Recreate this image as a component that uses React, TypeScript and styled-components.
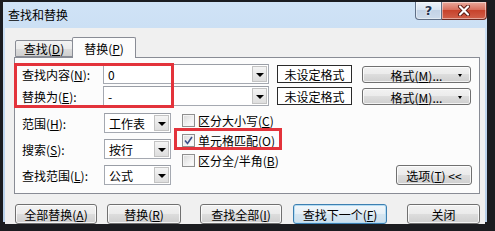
import styled, { createGlobalStyle } from 'styled-components';

const GlobalStyle = createGlobalStyle`
  html, body {
    margin: 0;
    padding: 0;
  }
  body {
    font-family: "Noto Sans CJK SC", "Noto Sans", sans-serif;
    font-size: 12px;
    color: #000000;
  }
`;

const Screen = styled.div`
  width: 495px;
  height: 231px;
  box-sizing: border-box;
  padding: 2px 8px 9px 3px;
  background: #1b1c20;
  overflow: hidden;
`;

const Window = styled.div`
  height: 100%;
  box-sizing: border-box;
  display: flex;
  flex-direction: column;
  padding: 0 2px 1px 2px;
  background: linear-gradient(180deg, #d0e3f6 0%, #c0d7ef 45%, #b8d0ea 100%);
`;

const TitleBar = styled.div`
  height: 26px;
  flex-shrink: 0;
  display: flex;
  align-items: flex-start;
  margin-right: -2px;
`;

const TitleText = styled.div`
  flex: 1;
  padding-left: 3px;
  line-height: 26px;
  font-size: 12px;
  color: #000000;
`;

const CaptionButton = styled.div<{ $w: number; $variant: 'help' | 'close' }>`
  width: ${(p) => p.$w}px;
  height: 18px;
  box-sizing: border-box;
  display: flex;
  align-items: center;
  justify-content: center;
  border: 1px solid ${(p) => (p.$variant === 'close' ? '#6b2a22' : '#5f6f86')};
  border-top: none;
  border-left-width: ${(p) => (p.$variant === 'close' ? '0' : '1px')};
  border-radius: ${(p) => (p.$variant === 'close' ? '0 0 4px 0' : '0 0 0 4px')};
  background: ${(p) =>
    p.$variant === 'close'
      ? 'linear-gradient(180deg, #e9a99c 0%, #d8705e 45%, #c7432c 50%, #d0604a 100%)'
      : 'linear-gradient(180deg, #eef3f9 0%, #d9e4f1 45%, #c3d3e6 50%, #cddbeb 100%)'};
  box-shadow: inset 0 0 0 1px rgba(255, 255, 255, 0.45);
`;

const HelpGlyph = styled.span`
  font-family: "DejaVu Sans", sans-serif;
  font-weight: bold;
  font-size: 13px;
  line-height: 1;
  color: #23324d;
  text-shadow: 0 0 2px #ffffff, 0 0 1px #ffffff;
`;

const Client = styled.div`
  flex: 1;
  display: flex;
  flex-direction: column;
  padding: 9px 5px 0 9px;
  background: #f0f0f0;
`;

const TabBar = styled.div`
  height: 20px;
  display: flex;
  align-items: flex-end;
  padding-left: 1px;
`;

const Tab = styled.div<{ $active?: boolean; $w: number }>`
  width: ${(p) => p.$w}px;
  height: ${(p) => (p.$active ? 21 : 17)}px;
  margin-bottom: ${(p) => (p.$active ? -1 : 0)}px;
  margin-left: ${(p) => (p.$active ? -1 : 0)}px;
  box-sizing: border-box;
  position: relative;
  z-index: ${(p) => (p.$active ? 1 : 0)};
  display: flex;
  align-items: center;
  justify-content: center;
  border: 1px solid #898c95;
  border-bottom: ${(p) => (p.$active ? 'none' : '1px solid #898c95')};
  border-radius: 2px 2px 0 0;
  background: ${(p) =>
    p.$active ? '#fcfcfc' : 'linear-gradient(180deg, #f3f3f3 0%, #ebebeb 50%, #dddddd 51%, #cfcfcf 100%)'};
`;

const Panel = styled.div`
  position: relative;
  display: flex;
  flex-direction: column;
  padding: 6px 7px 8px 7px;
  border: 1px solid #898c95;
  background: #fcfcfc;
`;

const FieldRow = styled.div`
  height: 20px;
  display: flex;
  align-items: center;
  & + & {
    margin-top: 2px;
  }
`;

const Label = styled.span<{ $w: number }>`
  width: ${(p) => p.$w}px;
  flex-shrink: 0;
  white-space: nowrap;
`;

const Key = styled.u`
  text-underline-offset: 1px;
`;

const Combo = styled.div<{ $w: number }>`
  width: ${(p) => p.$w}px;
  height: 20px;
  box-sizing: border-box;
  flex-shrink: 0;
  display: flex;
  align-items: center;
  border: 1px solid #a5a9b1;
  border-top-color: #9a9ea6;
  background: #ffffff;
`;

const ComboText = styled.span`
  flex: 1;
  padding-left: 4px;
  white-space: nowrap;
`;

const DropButton = styled.span`
  width: 15px;
  height: 16px;
  margin-right: 1px;
  box-sizing: border-box;
  display: flex;
  align-items: center;
  justify-content: center;
  border: 1px solid #c3c3c3;
  background: linear-gradient(180deg, #f4f4f4 0%, #dedede 100%);

  &::after {
    content: '';
    border-left: 4px solid transparent;
    border-right: 4px solid transparent;
    border-top: 4px solid #000000;
    margin-top: 1px;
  }
`;

const FormatState = styled.div`
  width: 75px;
  height: 18px;
  margin-left: 8px;
  box-sizing: border-box;
  display: flex;
  align-items: center;
  justify-content: center;
  border: 1px solid #2a2a2a;
  background: #ffffff;
  white-space: nowrap;
`;

const PushButton = styled.button<{ $w: number; $h?: number; $ml?: number; $focused?: boolean }>`
  width: ${(p) => p.$w}px;
  height: ${(p) => p.$h ?? 20}px;
  margin-left: ${(p) => p.$ml ?? 0}px;
  flex-shrink: 0;
  box-sizing: border-box;
  padding: 0;
  border: 1px solid ${(p) => (p.$focused ? '#3c7fb1' : '#707070')};
  border-radius: 3px;
  background: ${(p) =>
    p.$focused
      ? 'linear-gradient(180deg, #f1f7fb 0%, #e6f0f7 49%, #d6e6f1 50%, #cbdfed 100%)'
      : 'linear-gradient(180deg, #f2f2f2 0%, #ebebeb 49%, #dddddd 50%, #cfcfcf 100%)'};
  box-shadow: inset 0 0 0 1px ${(p) => (p.$focused ? '#b4dcf3' : 'rgba(255, 255, 255, 0.75)')};
  font: inherit;
  color: #000000;
  white-space: nowrap;
`;

const MenuButton = styled(PushButton)`
  display: grid;
  grid-template-columns: 12px 1fr 12px;
  align-items: center;
`;

const MenuArrow = styled.span`
  justify-self: start;
  width: 0;
  height: 0;
  border-left: 2px solid transparent;
  border-right: 2px solid transparent;
  border-top: 3px solid #000000;
`;

const OptionsSection = styled.div`
  display: flex;
  padding-top: 4px;
`;

const SelectColumn = styled.div`
  display: flex;
  flex-direction: column;
  gap: 4px;
  padding-top: 3px;
`;

const CheckColumn = styled.div`
  display: flex;
  flex-direction: column;
  margin-left: 11px;
`;

const CheckRow = styled.label`
  height: 20px;
  display: flex;
  align-items: center;
  gap: 3px;
  white-space: nowrap;
`;

const CheckBox = styled.span<{ $checked?: boolean }>`
  width: 13px;
  height: 13px;
  box-sizing: border-box;
  display: flex;
  align-items: center;
  justify-content: center;
  border: 1px solid #8f8f8f;
  background: linear-gradient(135deg, #d8d8d8 0%, #f2f2f2 60%, #ffffff 100%);
  box-shadow: inset 0 0 0 1px #f4f4f4;
`;

const OptionsButton = styled(PushButton)`
  margin-left: auto;
  align-self: flex-end;
`;

const Marker = styled.div`
  position: absolute;
  box-sizing: border-box;
  border: 3px solid #e3333b;
  pointer-events: none;
`;

const ButtonRow = styled.div`
  display: flex;
  margin-top: 10px;
  padding-left: 1px;
`;

export default function App() {
  return (
    <>
      <GlobalStyle />
      <Screen>
        <Window>
          <TitleBar>
            <TitleText>查找和替换</TitleText>
            <CaptionButton $w={27} $variant="help">
              <HelpGlyph>?</HelpGlyph>
            </CaptionButton>
            <CaptionButton $w={45} $variant="close">
              <svg width="14" height="11" viewBox="0 0 14 11">
                <path d="M3 1.5 L11 9.5 M11 1.5 L3 9.5" stroke="#5a1a12" strokeWidth="4" strokeLinecap="round" />
                <path d="M3 1.5 L11 9.5 M11 1.5 L3 9.5" stroke="#ffffff" strokeWidth="2.2" strokeLinecap="round" />
              </svg>
            </CaptionButton>
          </TitleBar>

          <Client>
            <TabBar>
              <Tab $w={58}>
                查找(<Key>D</Key>)
              </Tab>
              <Tab $w={64} $active>
                替换(<Key>P</Key>)
              </Tab>
            </TabBar>

            <Panel>
              <FieldRow>
                <Label $w={81}>
                  查找内容(<Key>N</Key>):
                </Label>
                <Combo $w={166}>
                  <ComboText>0</ComboText>
                  <DropButton />
                </Combo>
                <FormatState>未设定格式</FormatState>
                <MenuButton type="button" $w={109} $h={17} $ml={10}>
                  <span />
                  <span>
                    格式(<Key>M</Key>)...
                  </span>
                  <MenuArrow />
                </MenuButton>
              </FieldRow>
              <FieldRow>
                <Label $w={81}>
                  替换为(<Key>E</Key>):
                </Label>
                <Combo $w={166}>
                  <ComboText>-</ComboText>
                  <DropButton />
                </Combo>
                <FormatState>未设定格式</FormatState>
                <MenuButton type="button" $w={109} $h={17} $ml={10}>
                  <span />
                  <span>
                    格式(<Key>M</Key>)...
                  </span>
                  <MenuArrow />
                </MenuButton>
              </FieldRow>

              <OptionsSection>
                <SelectColumn>
                  <FieldRow>
                    <Label $w={82}>
                      范围(<Key>H</Key>):
                    </Label>
                    <Combo $w={67}>
                      <ComboText>工作表</ComboText>
                      <DropButton />
                    </Combo>
                  </FieldRow>
                  <FieldRow>
                    <Label $w={82}>
                      搜索(<Key>S</Key>):
                    </Label>
                    <Combo $w={67}>
                      <ComboText>按行</ComboText>
                      <DropButton />
                    </Combo>
                  </FieldRow>
                  <FieldRow>
                    <Label $w={82}>
                      查找范围(<Key>L</Key>):
                    </Label>
                    <Combo $w={67}>
                      <ComboText>公式</ComboText>
                      <DropButton />
                    </Combo>
                  </FieldRow>
                </SelectColumn>

                <CheckColumn>
                  <CheckRow>
                    <CheckBox />
                    <span>
                      区分大小写(<Key>C</Key>)
                    </span>
                  </CheckRow>
                  <CheckRow>
                    <CheckBox $checked>
                      <svg width="9" height="9" viewBox="0 0 9 9">
                        <path d="M1 4.5 L3.5 7.5 L8 1" fill="none" stroke="#3b4f8a" strokeWidth="1.6" />
                      </svg>
                    </CheckBox>
                    <span>
                      单元格匹配(<Key>O</Key>)
                    </span>
                  </CheckRow>
                  <CheckRow>
                    <CheckBox />
                    <span>
                      区分全/半角(<Key>B</Key>)
                    </span>
                  </CheckRow>
                </CheckColumn>

                <OptionsButton type="button" $w={76}>
                  选项(<Key>T</Key>) &lt;&lt;
                </OptionsButton>
              </OptionsSection>

              <Marker style={{ left: -1, top: 5, width: 160, height: 45 }} />
              <Marker style={{ left: 159, top: 70, width: 108, height: 22 }} />
            </Panel>

            <ButtonRow>
              <PushButton type="button" $w={82}>
                全部替换(<Key>A</Key>)
              </PushButton>
              <PushButton type="button" $w={74} $ml={10}>
                替换(<Key>R</Key>)
              </PushButton>
              <PushButton type="button" $w={82} $ml={19}>
                查找全部(<Key>I</Key>)
              </PushButton>
              <PushButton type="button" $w={94} $ml={11} $focused>
                查找下一个(<Key>F</Key>)
              </PushButton>
              <PushButton type="button" $w={73} $ml={20}>
                关闭
              </PushButton>
            </ButtonRow>
          </Client>
        </Window>
      </Screen>
    </>
  );
}
